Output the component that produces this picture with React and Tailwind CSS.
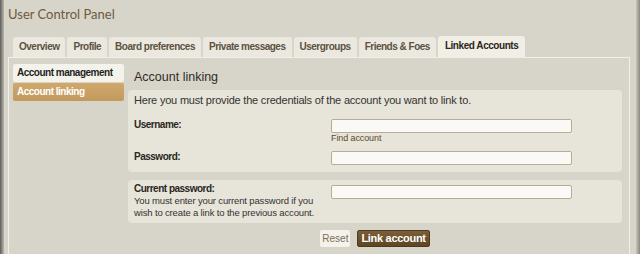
import React from "react";

const tabs = [
  "Overview",
  "Profile",
  "Board preferences",
  "Private messages",
  "Usergroups",
  "Friends & Foes",
];

export default function App() {
  return (
    <div className="flex w-[640px] h-[254px] overflow-hidden bg-[#d7d4ca] font-['Liberation_Sans',Arial,sans-serif] text-[#333]">
      {/* dark page edge */}
      <div className="w-[4px] shrink-0 bg-gradient-to-r from-[#5f5d58] to-[#bcb9b0]" />

      <div className="flex-1 flex flex-col pl-[4px] pr-[6px]">
        <h1 className="h-[28px] shrink-0 pt-[5px] font-['Lato',sans-serif] text-[13px] leading-[18px] text-[#6e5a3c]">
          User Control Panel
        </h1>

        {/* tabs */}
        <div className="flex shrink-0 items-end gap-[2px] pl-[5px] pt-[8px]">
          {tabs.map((t) => (
            <div
              key={t}
              className="h-[20px] px-[6px] rounded-t-[3px] bg-[#ebe9df] text-[10px] font-bold tracking-[-0.5px] leading-[20px] text-[#5c5243]"
            >
              {t}
            </div>
          ))}
          <div className="h-[22px] -mb-[1px] px-[7px] rounded-t-[3px] bg-[#f0eee5] text-[10px] font-bold tracking-[-0.45px] leading-[20px] text-[#2b2720] relative z-10">
            Linked Accounts
          </div>
        </div>

        {/* panel */}
        <div className="flex-1 flex gap-[4px] border border-b-0 border-[#f2f0e8] pt-[6px] pl-[4px] pr-[7px]">
          {/* side menu */}
          <div className="w-[111px] shrink-0 flex flex-col gap-[1px]">
            <div className="h-[18px] pl-[4px] rounded-[2px] bg-[#f3f2eb] text-[10px] font-bold tracking-[-0.5px] leading-[18px] text-[#1f1f1f] whitespace-nowrap">
              Account management
            </div>
            <div className="h-[18px] pl-[4px] rounded-[2px] bg-gradient-to-b from-[#d0a86c] to-[#c39a5e] text-[10px] font-bold tracking-[-0.5px] leading-[18px] text-white">
              Account linking
            </div>
          </div>

          {/* main */}
          <div className="flex-1 flex flex-col">
            <h2 className="h-[26px] shrink-0 pt-[5px] pl-[6px] text-[12.5px] leading-[16px] text-[#2f2c27]">
              Account linking
            </h2>

            <div className="shrink-0 rounded-[4px] bg-[#e7e4d9] pl-[6px] pt-[3px] pb-[7px]">
              <p className="text-[11px] tracking-[-0.2px] leading-[14px] text-[#333]">
                Here you must provide the credentials of the account you want to link to.
              </p>
              <div className="flex mt-[12px]">
                <label className="w-[197px] text-[10px] font-bold tracking-[-0.5px] leading-[12px] text-[#2a2722]">
                  Username:
                </label>
                <div className="flex flex-col">
                  <input className="w-[241px] h-[14px] rounded-[2px] border border-[#b7ab95] bg-[#faf9f5]" />
                  <span className="text-[9px] tracking-[-0.1px] leading-[11px] text-[#5e4a2c]">Find account</span>
                </div>
              </div>
              <div className="flex mt-[7px]">
                <label className="w-[197px] text-[10px] font-bold tracking-[-0.5px] leading-[12px] text-[#2a2722]">
                  Password:
                </label>
                <input
                  type="password"
                  className="w-[241px] h-[14px] rounded-[2px] border border-[#b7ab95] bg-[#faf9f5]"
                />
              </div>
            </div>

            <div className="shrink-0 mt-[8px] flex rounded-[4px] bg-[#e7e4d9] pl-[6px] pt-[3px] pb-[4px]">
              <div className="w-[197px] text-[9.5px] tracking-[-0.15px] leading-[12px] text-[#333]">
                <div className="text-[10px] font-bold tracking-[-0.5px] text-[#2a2722]">Current password:</div>
                <div>You must enter your current password if you wish to create a link to the previous account.</div>
              </div>
              <input
                type="password"
                className="mt-[2px] w-[241px] h-[14px] rounded-[2px] border border-[#b7ab95] bg-[#faf9f5]"
              />
            </div>

            <div className="shrink-0 flex justify-center gap-[7px] mt-[7px]">
              <button className="h-[17px] px-[2px] rounded-[2px] bg-[#f4f2ea] text-[10px] leading-[17px] text-[#77705f]">
                Reset
              </button>
              <button className="h-[17px] px-[3px] rounded-[2px] border border-[#4d3a1f] bg-gradient-to-b from-[#7a5f38] to-[#5e4523] text-[11px] font-bold tracking-[-0.3px] leading-[15px] text-white">
                Link account
              </button>
            </div>
          </div>
        </div>
      </div>

      <div className="w-[4px] shrink-0 bg-gradient-to-r from-[#c8c5bc] to-[#8a8782]" />
    </div>
  );
}
